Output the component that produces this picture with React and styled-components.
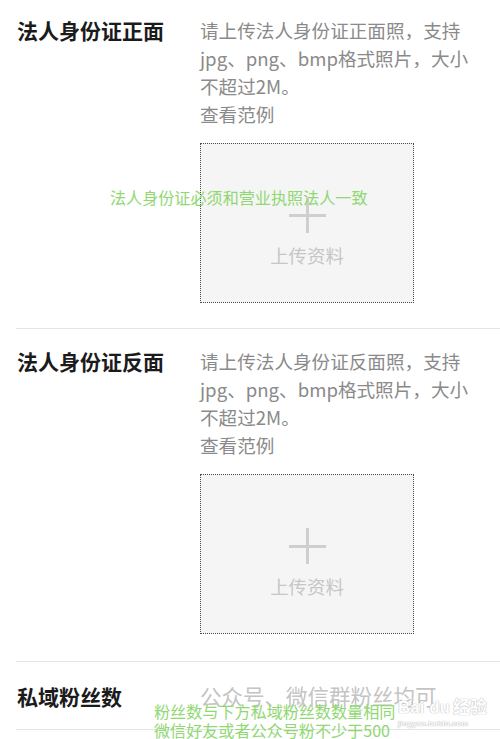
import React from "react";
import styled, { createGlobalStyle } from "styled-components";

const Global = createGlobalStyle`
  html, body { margin: 0; padding: 0; background: #fff; }
  body { font-family: "Noto Sans CJK SC", "Noto Sans", sans-serif; }
`;

const Page = styled.div`
  position: relative;
  width: 500px;
  height: 739px;
  overflow: hidden;
  background: #fff;
`;

const Divided = styled.div`
  margin-left: 16px;
  border-bottom: 1px solid #e4e4e4;
`;

const Inner = styled.div`
  display: flex;
  padding: ${(p) => p.$top}px 0 ${(p) => p.$bottom}px 1px;
`;

const Label = styled.div`
  width: 183px;
  flex: none;
  font-size: 21px;
  line-height: 28px;
  font-weight: 700;
  color: #1b1b1b;
  white-space: nowrap;
`;

const Col = styled.div`
  display: flex;
  flex-direction: column;
`;

const Desc = styled.div`
  font-size: 18.6px;
  line-height: 28px;
  color: #8a8a8a;
  white-space: nowrap;
`;

const Upload = styled.div`
  margin-top: 15px;
  width: 212px;
  height: 105px;
  padding-top: 53px;
  box-sizing: content-box;
  border: 1px dotted #4a4a4a;
  background: #f5f5f5;
  display: flex;
  flex-direction: column;
  align-items: center;
`;

const UploadText = styled.div`
  margin-top: 10px;
  font-size: 18.4px;
  line-height: 24px;
  color: #c6c6c6;
`;

const Row = styled.div`
  display: flex;
  align-items: center;
  height: 67px;
  padding-left: 1px;
`;

const Placeholder = styled.div`
  font-size: 21.5px;
  color: #c4c4c4;
  white-space: nowrap;
`;

const Note = styled.div`
  position: absolute;
  left: ${(p) => p.$x}px;
  top: ${(p) => p.$y}px;
  font-size: 16.1px;
  line-height: 19px;
  color: #8fd872;
  white-space: nowrap;
`;

const Watermark = styled.div`
  position: absolute;
  left: 398px;
  top: 697px;
  color: #fff;
  text-shadow: 0 0 1px #b5b5b5, 0 0 1px #b5b5b5;
  font-family: "Liberation Sans", sans-serif;
  display: flex;
  flex-direction: column;
  align-items: flex-start;
`;

const WmBig = styled.div`
  font-size: 17px;
  font-weight: 700;
  line-height: 18px;
  span { font-family: "Noto Sans CJK SC", sans-serif; margin-left: 3px; }
`;

const WmSmall = styled.div`
  font-size: 8px;
  line-height: 10px;
  font-weight: 700;
  margin-top: 2px;
`;

const Plus = () => (
  <svg width="37" height="36" viewBox="0 0 37 36">
    <path d="M0 18.5H37M18.5 0V36" stroke="#cfcfcf" strokeWidth="3" />
  </svg>
);

const IdSection = ({ label, side, top, bottom }) => (
  <Divided>
    <Inner $top={top} $bottom={bottom}>
      <Label>{label}</Label>
      <Col>
        <Desc>请上传法人身份证{side}照，支持</Desc>
        <Desc>jpg、png、bmp格式照片，大小</Desc>
        <Desc>不超过2M。</Desc>
        <Desc>查看范例</Desc>
        <Upload>
          <Plus />
          <UploadText>上传资料</UploadText>
        </Upload>
      </Col>
    </Inner>
  </Divided>
);

export default function App() {
  return (
    <Page>
      <Global />
      <IdSection label="法人身份证正面" side="正面" top={16} bottom={25} />
      <IdSection label="法人身份证反面" side="反面" top={18} bottom={27} />
      <Divided>
        <Row>
          <Label>私域粉丝数</Label>
          <Placeholder>公众号、微信群粉丝均可</Placeholder>
        </Row>
      </Divided>
      <Note $x={110} $y={188}>法人身份证必须和营业执照法人一致</Note>
      <Watermark>
        <WmBig>
          Bai du<span>经验</span>
        </WmBig>
        <WmSmall>jingyan.baidu.com</WmSmall>
      </Watermark>
      <Note $x={154} $y={702}>
        粉丝数与下方私域粉丝数数量相同
        <br />
        微信好友或者公众号粉不少于500
      </Note>
    </Page>
  );
}
